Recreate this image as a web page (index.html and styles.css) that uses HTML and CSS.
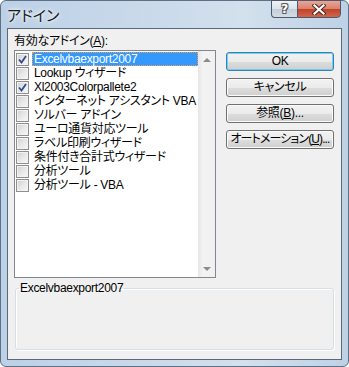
FILE: index.html
```html
<!DOCTYPE html>
<html>
<head>
  <meta charset="utf-8">
  <title>アドイン</title>
  <link rel="stylesheet" href="styles.css">
</head>
<body>
  <div class="window">
    <div class="titlebar">
      <span class="title">アドイン</span>
      <div class="caption-buttons">
        <div class="cap-btn help">?</div>
        <div class="cap-btn close">
          <svg width="14" height="11" viewBox="0 0 14 11">
            <path d="M2.5 1.5 L11.5 9.5 M11.5 1.5 L2.5 9.5" stroke="#4a2a22" stroke-width="4.2" stroke-linecap="square"/>
            <path d="M2.5 1.5 L11.5 9.5 M11.5 1.5 L2.5 9.5" stroke="#ffffff" stroke-width="2.2" stroke-linecap="square"/>
          </svg>
        </div>
      </div>
    </div>

    <div class="client">
      <div class="main">
        <div class="left">
          <div class="label">有効なアドイン(<u>A</u>):</div>
          <div class="listbox">
            <ul class="items">
              <li class="item"><span class="cb checked"></span><span class="text selected">Excelvbaexport2007</span></li>
              <li class="item"><span class="cb"></span><span class="text">Lookup ウィザード</span></li>
              <li class="item"><span class="cb checked"></span><span class="text">Xl2003Colorpallete2</span></li>
              <li class="item"><span class="cb"></span><span class="text">インターネット アシスタント VBA</span></li>
              <li class="item"><span class="cb"></span><span class="text">ソルバー アドイン</span></li>
              <li class="item"><span class="cb"></span><span class="text">ユーロ通貨対応ツール</span></li>
              <li class="item"><span class="cb"></span><span class="text">ラベル印刷ウィザード</span></li>
              <li class="item"><span class="cb"></span><span class="text">条件付き合計式ウィザード</span></li>
              <li class="item"><span class="cb"></span><span class="text">分析ツール</span></li>
              <li class="item"><span class="cb"></span><span class="text">分析ツール - VBA</span></li>
            </ul>
            <div class="scrollbar">
              <div class="arrow up"></div>
              <div class="arrow down"></div>
            </div>
          </div>
        </div>

        <div class="buttons">
          <div class="btn default">OK</div>
          <div class="btn">キャンセル</div>
          <div class="btn">参照(<u>B</u>)...</div>
          <div class="btn narrow">オートメーション(<u>U</u>)...</div>
        </div>
      </div>

      <fieldset class="group">
        <legend>Excelvbaexport2007</legend>
      </fieldset>
    </div>
  </div>
</body>
</html>
```

FILE: styles.css
```css
body {
  margin: 0;
  background: #ffffff;
  font-family: "Liberation Sans", "Noto Sans CJK JP", sans-serif;
  font-size: 12px;
  font-feature-settings: "palt";
  letter-spacing: -0.3px;
  color: #000;
}

.window {
  width: 349px;
  height: 367px;
  box-sizing: border-box;
  border: 1px solid #5e7086;
  border-radius: 6px;
  background: linear-gradient(to right, #bcd0e6 0%, #c9d9ea 40%, #d3e0ed 70%, #bdd1e6 100%);
  padding: 0 6px 6px 6px;
  display: flex;
  flex-direction: column;
}

/* title bar */
.titlebar {
  height: 27px;
  display: flex;
  justify-content: space-between;
  align-items: flex-start;
}

.title {
  font-family: "Noto Sans CJK JP", sans-serif;
  font-size: 15px;
  line-height: 15px;
  letter-spacing: 0;
  margin-top: 6px;
  color: #1a1a1a;
  text-shadow: 0 0 6px #fff, 0 0 3px #fff;
}

.caption-buttons {
  display: flex;
  margin-top: -1px;
  margin-right: 1px;
}

.cap-btn {
  height: 18px;
  box-sizing: border-box;
  border: 1px solid #4b5a6b;
  display: flex;
  align-items: center;
  justify-content: center;
}

.help {
  width: 26px;
  border-right: none;
  border-radius: 0 0 0 4px;
  background: linear-gradient(#eef2f6 0%, #dbe3eb 50%, #c3ced9 51%, #d4dde6 100%);
  font-family: "DejaVu Sans", sans-serif;
  font-weight: bold;
  font-size: 12px;
  color: #fff;
  text-shadow: 1px 1px 0 #555, -1px -1px 0 #555, 1px -1px 0 #555, -1px 1px 0 #555;
}

.close {
  width: 44px;
  border-radius: 0 0 4px 0;
  background: linear-gradient(#e8a697 0%, #d9806c 50%, #c0412b 51%, #d2654c 100%);
}

/* client area */
.client {
  flex: 1;
  background: #f0f0f0;
  border: 1px solid #5b6876;
  display: flex;
  flex-direction: column;
}

.main {
  display: flex;
  padding: 5px 7px 0 6px;
}

.left {
  width: 202px;
}

.label {
  line-height: 14px;
  margin-bottom: 2px;
}

.listbox {
  height: 228px;
  box-sizing: border-box;
  border: 1px solid #828790;
  background: #fff;
  display: flex;
}

.items {
  list-style: none;
  margin: 0;
  padding: 1px 0 0 0;
  flex: 1;
  min-width: 0;
}

.item {
  height: 14px;
  display: flex;
  align-items: center;
}

.cb {
  width: 13px;
  height: 13px;
  box-sizing: border-box;
  margin-left: 1px;
  margin-right: 3px;
  border: 1px solid #8f8f8f;
  background: linear-gradient(135deg, #cfcfcf 0%, #e8e8e8 50%, #f8f8f8 100%);
  box-shadow: inset 0 0 0 1px #f2f2f2;
  flex-shrink: 0;
}

.cb.checked {
  background:
    url("data:image/svg+xml;utf8,<svg xmlns='http://www.w3.org/2000/svg' width='11' height='11'><path d='M2 5.5 L4.5 8.5 L9 2' fill='none' stroke='%23324b8c' stroke-width='1.8'/></svg>") no-repeat center,
    linear-gradient(135deg, #cfcfcf 0%, #e8e8e8 50%, #f8f8f8 100%);
}

.text {
  flex: 1;
  line-height: 12px;
  height: 14px;
  box-sizing: border-box;
  padding: 0 1px;
  border: 1px solid transparent;
  white-space: nowrap;
}

.text.selected {
  background: #3399ff;
  color: #fff;
  border: 1px dotted #f0a040;
}

.scrollbar {
  width: 17px;
  background: linear-gradient(to right, #e6e6e6 0%, #f3f3f3 30%, #f0f0f0 100%);
  display: flex;
  flex-direction: column;
  justify-content: space-between;
}

.arrow {
  height: 17px;
  display: flex;
  align-items: center;
  justify-content: center;
}

.arrow::after {
  content: "";
  width: 0;
  height: 0;
  border-left: 4px solid transparent;
  border-right: 4px solid transparent;
}

.arrow.up::after {
  border-bottom: 4px solid #8b8b8b;
}

.arrow.down::after {
  border-top: 4px solid #8b8b8b;
}

/* buttons */
.buttons {
  width: 108px;
  margin-left: 10px;
  margin-top: 18px;
  display: flex;
  flex-direction: column;
  gap: 7px;
}

.btn {
  height: 19px;
  box-sizing: border-box;
  border: 1px solid #707070;
  border-radius: 3px;
  background: linear-gradient(#f2f2f2 0%, #ebebeb 50%, #dddddd 51%, #cfcfcf 100%);
  box-shadow: inset 0 0 0 1px #fbfbfb;
  text-align: center;
  line-height: 16px;
  white-space: nowrap;
}

.btn.narrow {
  letter-spacing: -0.9px;
}

.btn.default {
  border-color: #3c7fb1;
  box-shadow: inset 0 0 0 1px #6fd0f5;
}

/* group box */
.group {
  flex: 1;
  margin: 3px 7px 9px 7px;
  padding: 0;
  border: 1px solid #d5dfe5;
  border-radius: 3px;
  box-shadow: inset 1px 1px 0 #fff, 1px 1px 0 #fff;
  min-width: 0;
}

.group legend {
  padding: 0 1px;
  margin-left: 3px;
  line-height: 14px;
}
```
